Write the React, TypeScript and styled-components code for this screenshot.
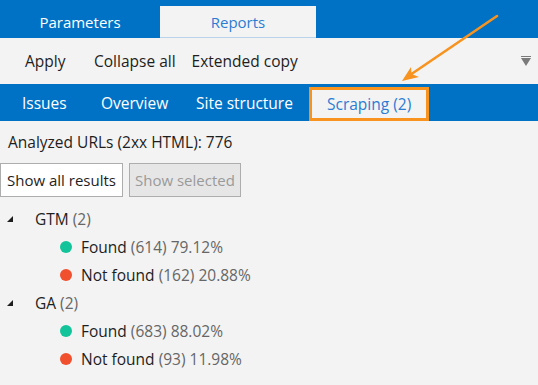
import React from "react";
import styled, { createGlobalStyle } from "styled-components";

const GlobalStyle = createGlobalStyle`
  html, body {
    margin: 0;
    padding: 0;
    background: #f3f3f3;
  }
  body {
    font-family: "Segoe UI", "Open Sans", "Noto Sans", sans-serif;
    font-size: 15px;
    color: #1e1e1e;
  }
`;

const BLUE = "#0072c6";

type Leaf = { label: string; count: number; pct: string; ok: boolean };
type Group = { name: string; items: Leaf[] };

const groups: Group[] = [
  {
    name: "GTM",
    items: [
      { label: "Found", count: 614, pct: "79.12%", ok: true },
      { label: "Not found", count: 162, pct: "20.88%", ok: false },
    ],
  },
  {
    name: "GA",
    items: [
      { label: "Found", count: 683, pct: "88.02%", ok: true },
      { label: "Not found", count: 93, pct: "11.98%", ok: false },
    ],
  },
];

const subTabs = [
  { label: "Issues", w: 79 },
  { label: "Overview", w: 95 },
  { label: "Site structure", w: 127 },
];

const App: React.FC = () => {
  return (
    <Page>
      <GlobalStyle />
      <TopTabs>
        <TopTab>Parameters</TopTab>
        <TopTab $active>Reports</TopTab>
      </TopTabs>

      <Toolbar>
        <ToolButton $minW={69}>Apply</ToolButton>
        <ToolButton>Collapse all</ToolButton>
        <ToolButton>Extended copy</ToolButton>
        <Spacer />
        <MenuArrow />
      </Toolbar>

      <SubTabs>
        {subTabs.map((t) => (
          <SubTab key={t.label} $w={t.w}>
            {t.label}
          </SubTab>
        ))}
        <ActiveSubTab>Scraping (2)</ActiveSubTab>
      </SubTabs>

      <Content>
        <Summary>Analyzed URLs (2xx HTML): 776</Summary>
        <Buttons>
          <Button $minW={123}>Show all results</Button>
          <Button disabled>Show selected</Button>
        </Buttons>

        <Tree>
          {groups.map((g) => (
            <React.Fragment key={g.name}>
              <GroupRow>
                <Caret />
                {g.name} <Count>({g.items.length})</Count>
              </GroupRow>
              {g.items.map((it) => (
                <LeafRow key={it.label}>
                  <Dot $ok={it.ok} />
                  {it.label}&nbsp;
                  <Count>
                    ({it.count}) {it.pct}
                  </Count>
                </LeafRow>
              ))}
            </React.Fragment>
          ))}
        </Tree>
      </Content>

      <Arrow width="110" height="80" viewBox="0 0 110 80">
        <line x1="101" y1="6" x2="14" y2="65" stroke="#f7931e" strokeWidth="2.6" strokeLinecap="round" />
        <path d="M6 71 L15 57 L15.5 64 L23 67 Z" fill="#f7931e" />
      </Arrow>
    </Page>
  );
};

export default App;

const Page = styled.div`
  position: relative;
  width: 538px;
  height: 385px;
  overflow: hidden;
  background: #f3f3f3;
`;

const TopTabs = styled.div`
  display: flex;
  height: 38px;
  padding-top: 6px;
  box-sizing: border-box;
  background: ${BLUE};
`;

const TopTab = styled.div<{ $active?: boolean }>`
  width: ${({ $active }) => ($active ? "156px" : "160px")};
  display: flex;
  align-items: center;
  justify-content: center;
  font-size: 15px;
  color: ${({ $active }) => ($active ? "#2b7cd3" : "#ffffff")};
  background: ${({ $active }) => ($active ? "#f3f3f3" : "transparent")};
  border-bottom: 1px solid ${({ $active }) => ($active ? "#b9d3ea" : "transparent")};
`;

const Toolbar = styled.div`
  display: flex;
  align-items: center;
  height: 46px;
  padding: 0 7px 0 17px;
`;

const ToolButton = styled.div<{ $minW?: number }>`
  min-width: ${({ $minW }) => ($minW ? `${$minW}px` : "auto")};
  box-sizing: border-box;
  padding: 0 8px;
  font-size: 15.5px;
  color: #1e1e1e;
`;

const Spacer = styled.div`
  flex: 1;
`;

const MenuArrow = styled.div`
  width: 10px;
  height: 10px;
  position: relative;
  &::before {
    content: "";
    position: absolute;
    left: 0;
    top: 0;
    width: 10px;
    height: 1px;
    background: #7a7a7a;
  }
  &::after {
    content: "";
    position: absolute;
    left: 0;
    top: 2px;
    border-left: 5px solid transparent;
    border-right: 5px solid transparent;
    border-top: 8px solid #7a7a7a;
  }
`;

const SubTabs = styled.div`
  display: flex;
  align-items: stretch;
  height: 37px;
  padding-left: 8px;
  background: ${BLUE};
`;

const SubTab = styled.div<{ $w: number }>`
  width: ${({ $w }) => $w}px;
  display: flex;
  align-items: center;
  padding-left: 14px;
  box-sizing: border-box;
  font-size: 15.5px;
  color: #ffffff;
`;

const ActiveSubTab = styled.div`
  display: flex;
  align-items: center;
  width: 120px;
  box-sizing: border-box;
  margin-top: 3px;
  padding-left: 15px;
  font-size: 15.5px;
  color: #2b7cd3;
  background: #f3f3f3;
  border: 3px solid #f7931e;
`;

const Content = styled.div`
  padding-top: 10px;
`;

const Summary = styled.div`
  padding-left: 8px;
  font-size: 15.5px;
  line-height: 22px;
`;

const Buttons = styled.div`
  display: flex;
  gap: 6px;
  margin-top: 10px;
`;

const Button = styled.button<{ $minW?: number }>`
  min-width: ${({ $minW }) => ($minW ? `${$minW}px` : "auto")};
  height: 34px;
  padding: 0 5px;
  font-family: inherit;
  font-size: 15px;
  color: #1e1e1e;
  background: #ffffff;
  border: 1px solid #adadad;
  &:disabled {
    color: #9a9a9a;
    background: #e6e6e6;
  }
`;

const Tree = styled.div`
  margin-top: 8px;
`;

const GroupRow = styled.div`
  display: flex;
  align-items: center;
  height: 28px;
  padding-left: 7px;
  font-size: 15.5px;
  white-space: pre;
`;

const Caret = styled.span`
  width: 0;
  height: 0;
  margin-right: 22px;
  border-left: 6px solid transparent;
  border-bottom: 6px solid #1e1e1e;
`;

const Count = styled.span`
  color: #666666;
`;

const LeafRow = styled.div`
  display: flex;
  align-items: center;
  height: 28px;
  padding-left: 60px;
  font-size: 15.5px;
  white-space: pre;
`;

const Dot = styled.span<{ $ok: boolean }>`
  width: 12px;
  height: 12px;
  border-radius: 50%;
  margin-right: 9px;
  background: ${({ $ok }) => ($ok ? "#13c49a" : "#f0502e")};
`;

const Arrow = styled.svg`
  position: absolute;
  left: 396px;
  top: 10px;
  pointer-events: none;
`;
